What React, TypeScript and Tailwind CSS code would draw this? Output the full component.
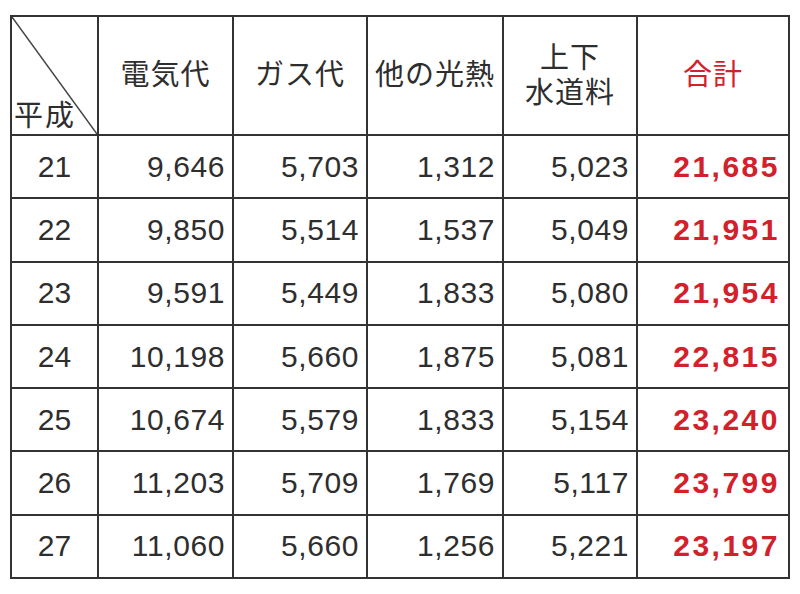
const rows = [
  { year: "21", denki: "9,646", gas: "5,703", other: "1,312", water: "5,023", total: "21,685" },
  { year: "22", denki: "9,850", gas: "5,514", other: "1,537", water: "5,049", total: "21,951" },
  { year: "23", denki: "9,591", gas: "5,449", other: "1,833", water: "5,080", total: "21,954" },
  { year: "24", denki: "10,198", gas: "5,660", other: "1,875", water: "5,081", total: "22,815" },
  { year: "25", denki: "10,674", gas: "5,579", other: "1,833", water: "5,154", total: "23,240" },
  { year: "26", denki: "11,203", gas: "5,709", other: "1,769", water: "5,117", total: "23,799" },
  { year: "27", denki: "11,060", gas: "5,660", other: "1,256", water: "5,221", total: "23,197" },
]

const cell = "border-2 border-[#333]"
const num = "border-2 border-[#333] text-right pr-[7px] tracking-[0.6px]"
const head = "border-2 border-[#333] font-normal tracking-[1px] text-[29px]"

export default function App() {
  return (
    <div
      className="w-[800px] h-[594px] bg-white pt-[15px] pl-[10px] text-[#2e2e2e]"
      style={{ fontFamily: '"Liberation Sans", "Noto Sans CJK JP", sans-serif' }}
    >
      <table className="w-[778px] table-fixed border-collapse text-[30px] leading-none">
        <colgroup>
          <col className="w-[87px]" />
          <col className="w-[135px]" />
          <col className="w-[134px]" />
          <col className="w-[136px]" />
          <col className="w-[134px]" />
          <col className="w-[152px]" />
        </colgroup>
        <thead>
          <tr className="h-[119px]">
            <th className={`${cell} relative p-0 font-normal`}>
              <svg className="absolute inset-0 h-full w-full" preserveAspectRatio="none" viewBox="0 0 100 100">
                <line x1="0" y1="0" x2="100" y2="100" stroke="#444" strokeWidth="1.5" vectorEffect="non-scaling-stroke" />
              </svg>
              <span className="absolute bottom-[3px] left-[2px] text-[29px] tracking-[2px]">平成</span>
            </th>
            <th className={head}>電気代</th>
            <th className={head}>ガス代</th>
            <th className={`${head} whitespace-nowrap tracking-[0px]`}>他の光熱</th>
            <th className={`${head} leading-[35px]`}>
              上下
              <br />
              水道料
            </th>
            <th className={`${head} font-bold text-[#d3212b]`}>合計</th>
          </tr>
        </thead>
        <tbody>
          {rows.map((r) => (
            <tr key={r.year} className="h-[63.3px]">
              <td className={`${cell} text-center`}>{r.year}</td>
              <td className={num}>{r.denki}</td>
              <td className={num}>{r.gas}</td>
              <td className={num}>{r.other}</td>
              <td className={num}>{r.water}</td>
              <td className={`${cell} text-right pr-[8px] font-bold text-[#d3212b] tracking-[2.5px]`}>{r.total}</td>
            </tr>
          ))}
        </tbody>
      </table>
    </div>
  )
}
